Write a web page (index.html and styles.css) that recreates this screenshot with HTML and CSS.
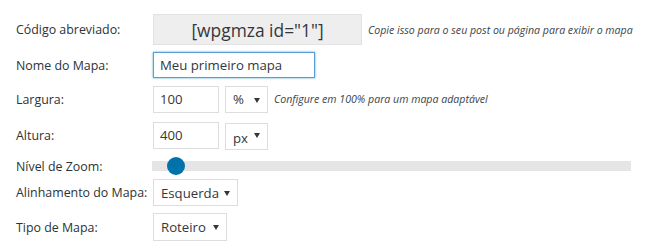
FILE: index.html
```html
<!DOCTYPE html>
<html>
  <head>
    <title>Configurações do Mapa</title>
    <meta name="viewport" content="width=device-width, initial-scale=1.0" />
    <link rel="stylesheet" href="styles.css">
  </head>
  <body>
    <form class="map-settings">
      <label class="label" for="shortcode">Código abreviado:</label>
      <div class="field">
        <input class="shortcode" id="shortcode" type="text" value='[wpgmza id="1"]' readonly />
        <span class="hint">Copie isso para o seu post ou página para exibir o mapa</span>
      </div>

      <label class="label" for="mapTitle">Nome do Mapa:</label>
      <div class="field">
        <input class="text-input title-input" id="mapTitle" type="text" value="Meu primeiro mapa" />
      </div>

      <label class="label" for="mapWidth">Largura:</label>
      <div class="field">
        <input class="text-input size-input" id="mapWidth" type="text" value="100" />
        <span class="select-wrap">
          <select class="select unit-select" id="widthType">
            <option>%</option>
            <option>px</option>
          </select>
        </span>
        <span class="hint">Configure em 100% para um mapa adaptável</span>
      </div>

      <label class="label" for="mapHeight">Altura:</label>
      <div class="field">
        <input class="text-input size-input" id="mapHeight" type="text" value="400" />
        <span class="select-wrap">
          <select class="select unit-select unit-low" id="heightType">
            <option>px</option>
            <option>%</option>
          </select>
        </span>
      </div>

      <span class="label">Nível de Zoom:</span>
      <div class="field">
        <div class="slider">
          <span class="slider-handle" style="left: 5%"></span>
        </div>
      </div>

      <label class="label" for="mapAlign">Alinhamento do Mapa:</label>
      <div class="field">
        <span class="select-wrap">
          <select class="select align-select" id="mapAlign">
            <option>Esquerda</option>
            <option>Centro</option>
            <option>Direita</option>
            <option>Nenhum</option>
          </select>
        </span>
      </div>

      <label class="label" for="mapType">Tipo de Mapa:</label>
      <div class="field">
        <span class="select-wrap">
          <select class="select type-select" id="mapType">
            <option>Roteiro</option>
            <option>Satélite</option>
            <option>Híbrido</option>
            <option>Terreno</option>
          </select>
        </span>
      </div>
    </form>
  </body>
</html>
```

FILE: styles.css
```css
body {
  margin: 0;
  background: #fff;
  color: #32373c;
  font-family: "Open Sans", "Noto Sans", sans-serif;
  font-size: 12.4px;
}
.map-settings {
  display: grid;
  grid-template-columns: 137px 1fr;
  grid-template-rows: 37px 34px 34px 38px 24px 29px 40px;
  align-items: center;
  padding: 11px 27px 0 16px;
}
.label {
  color: #2c3338;
  white-space: nowrap;
}
.field {
  display: flex;
  align-items: center;
  gap: 6px;
  white-space: nowrap;
}
input,
select {
  font-family: inherit;
  color: #32373c;
  margin: 0;
  box-sizing: border-box;
}
.shortcode {
  width: 209px;
  height: 31px;
  background: #eee;
  border: 1px solid #e2e2e2;
  font-size: 17.4px;
  text-align: center;
  padding: 0;
  outline: none;
}
.hint {
  font-size: 10.6px;
  font-style: italic;
  color: #3c434a;
}
.text-input {
  height: 27px;
  border: 1px solid #ddd;
  padding: 0 6px;
  font-size: 13.2px;
  outline: none;
}
.title-input {
  width: 162px;
  height: 26px;
  border-color: #5b9dd9;
  box-shadow: 0 0 2px rgba(30, 140, 190, 0.8);
}
.size-input {
  width: 66px;
}
.select-wrap {
  position: relative;
  display: inline-block;
}
.select-wrap::after {
  content: "";
  position: absolute;
  right: 8px;
  top: 12px;
  border-left: 3px solid transparent;
  border-right: 3px solid transparent;
  border-top: 5px solid #32373c;
  pointer-events: none;
}
.select {
  appearance: none;
  -webkit-appearance: none;
  height: 27px;
  border: 1px solid #ddd;
  background: #fff;
  font-size: 13.2px;
  padding: 0 14px 0 7px;
  outline: none;
}
.unit-select {
  width: 43px;
}
.unit-low {
  padding-top: 4px;
  margin-top: 2px;
}
.align-select {
  width: 85px;
}
.type-select {
  width: 74px;
  height: 28px;
}
.slider {
  position: relative;
  width: 479px;
  height: 10px;
  margin-left: -1px;
  background: #e5e5e5;
}
.slider-handle {
  position: absolute;
  top: -4px;
  width: 18px;
  height: 18px;
  margin-left: -9px;
  border-radius: 50%;
  background: #0073aa;
}
```
